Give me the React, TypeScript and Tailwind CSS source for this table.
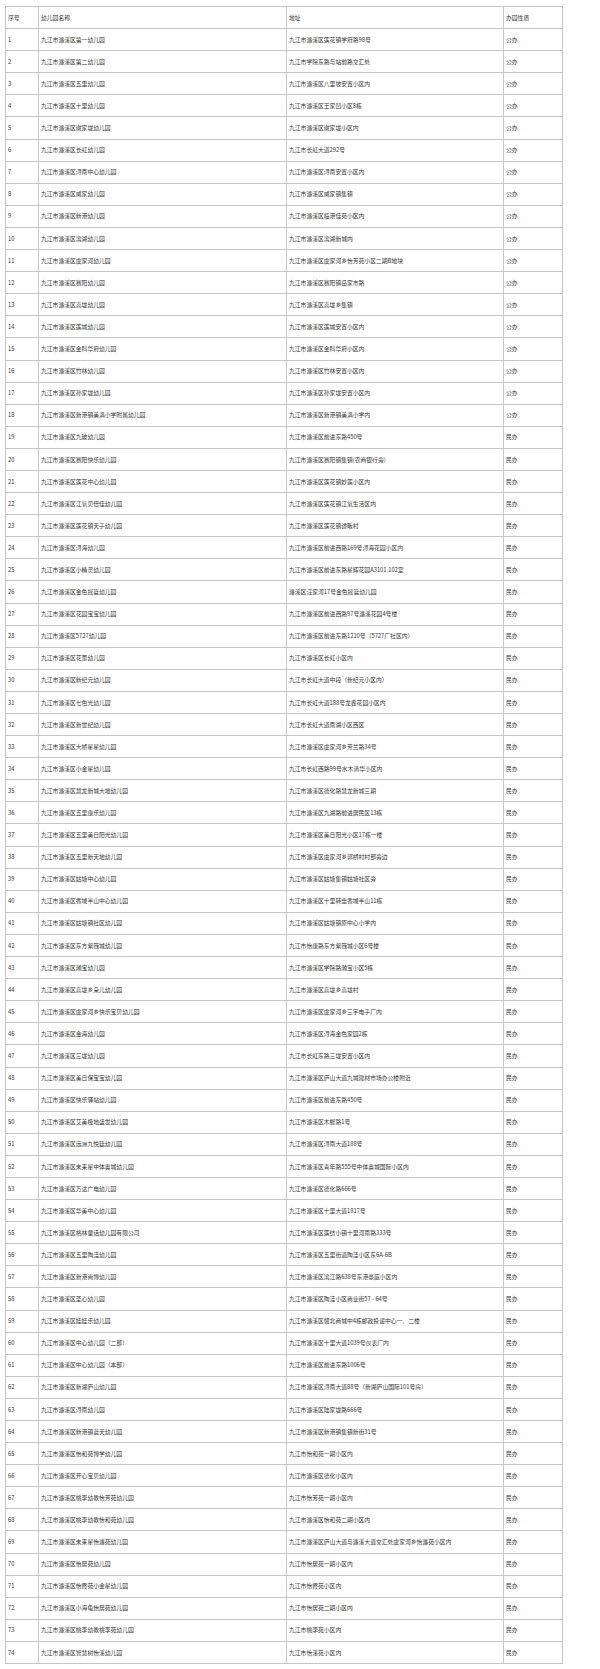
const rows: [string, string, string][] = [
  ['九江市濂溪区第一幼儿园', '九江市濂溪区莲花镇学府路98号', '公办'],
  ['九江市濂溪区第二幼儿园', '九江市学院东路与站前路交汇处', '公办'],
  ['九江市濂溪区五里幼儿园', '九江市濂溪区八里坡安置小区内', '公办'],
  ['九江市濂溪区十里幼儿园', '九江市濂溪区王家凹小区8栋', '公办'],
  ['九江市濂溪区谢家垅幼儿园', '九江市濂溪区谢家垅小区内', '公办'],
  ['九江市濂溪区长虹幼儿园', '九江市长虹大道292号', '公办'],
  ['九江市濂溪区浔南中心幼儿园', '九江市濂溪区浔南安置小区内', '公办'],
  ['九江市濂溪区威家幼儿园', '九江市濂溪区威家镇集镇', '公办'],
  ['九江市濂溪区新港幼儿园', '九江市濂溪区临港佳苑小区内', '公办'],
  ['九江市濂溪区滨湖幼儿园', '九江市濂溪区滨湖新城内', '公办'],
  ['九江市濂溪区虞家河幼儿园', '九江市濂溪区虞家河乡怡芳苑小区二期B地块', '公办'],
  ['九江市濂溪区赛阳幼儿园', '九江市濂溪区赛阳镇岳家市路', '公办'],
  ['九江市濂溪区高垅幼儿园', '九江市濂溪区高垅乡集镇', '公办'],
  ['九江市濂溪区莲城幼儿园', '九江市濂溪区莲城安置小区内', '公办'],
  ['九江市濂溪区金科华府幼儿园', '九江市濂溪区金科华府小区内', '公办'],
  ['九江市濂溪区竹林幼儿园', '九江市濂溪区竹林安置小区内', '公办'],
  ['九江市濂溪区孙家垅幼儿园', '九江市濂溪区孙家垅安置小区内', '公办'],
  ['九江市濂溪区新港镇美满小学附属幼儿园', '九江市濂溪区新港镇美满小学内', '公办'],
  ['九江市濂溪区九玻幼儿园', '九江市濂溪区前进东路450号', '民办'],
  ['九江市濂溪区赛阳快乐幼儿园', '九江市濂溪区赛阳镇集镇(农商银行旁)', '民办'],
  ['九江市濂溪区莲花中心幼儿园', '九江市濂溪区莲花镇妙莲小区内', '民办'],
  ['九江市濂溪区江氧贝倍佳幼儿园', '九江市濂溪区莲花镇江氧生活区内', '民办'],
  ['九江市濂溪区莲花镇天子幼儿园', '九江市濂溪区莲花镇谭畈村', '民办'],
  ['九江市濂溪区浔海幼儿园', '九江市濂溪区前进西路169号浔海花园小区内', '民办'],
  ['九江市濂溪区小精灵幼儿园', '九江市濂溪区前进东路星辉花园A3101.102室', '民办'],
  ['九江市濂溪区金色摇篮幼儿园', '濂溪区汪家河17号金色摇篮幼儿园', '民办'],
  ['九江市濂溪区花园宝宝幼儿园', '九江市濂溪区前进西路97号濂溪花园4号楼', '民办'],
  ['九江市濂溪区5727幼儿园', '九江市濂溪区前进东路1210号（5727厂社区内）', '民办'],
  ['九江市濂溪区花蕾幼儿园', '九江市濂溪区长虹小区内', '民办'],
  ['九江市濂溪区新纪元幼儿园', '九江市长虹大道中段（新纪元小区内）', '民办'],
  ['九江市濂溪区七色光幼儿园', '九江市长虹大道188号龙鑫花园小区内', '民办'],
  ['九江市濂溪区新世纪幼儿园', '九江市长虹大道南湖小区西区', '民办'],
  ['九江市濂溪区大桥星星幼儿园', '九江市濂溪区虞家河乡芳兰路34号', '民办'],
  ['九江市濂溪区小金星幼儿园', '九江市长虹西路99号水木清华小区内', '民办'],
  ['九江市濂溪区慧龙新城大地幼儿园', '九江市濂溪区德化路慧龙新城三期', '民办'],
  ['九江市濂溪区五里康乐幼儿园', '九江市濂溪区九湖路前进居民区13栋', '民办'],
  ['九江市濂溪区五里美日阳光幼儿园', '九江市濂溪区美日阳光小区17栋一楼', '民办'],
  ['九江市濂溪区五里新天地幼儿园', '九江市濂溪区虞家河乡郭桥村村部旁边', '民办'],
  ['九江市濂溪区姑塘中心幼儿园', '九江市濂溪区姑塘集镇姑塘社区旁', '民办'],
  ['九江市濂溪区香域半山中心幼儿园', '九江市濂溪区十里转盘香域半山11栋', '民办'],
  ['九江市濂溪区姑塘镇社区幼儿园', '九江市濂溪区姑塘镇原中心小学内', '民办'],
  ['九江市濂溪区东方紫薇城幼儿园', '九江市怡康路东方紫薇城小区6号楼', '民办'],
  ['九江市濂溪区瀚宝幼儿园', '九江市濂溪区学院路瀚宝小区5栋', '民办'],
  ['九江市濂溪区高垅乡朵儿幼儿园', '九江市濂溪区高垅乡高垅村', '民办'],
  ['九江市濂溪区虞家河乡快乐宝贝幼儿园', '九江市濂溪区虞家河乡三宇电子厂内', '民办'],
  ['九江市濂溪区金海幼儿园', '九江市濂溪区浔海金色家园2栋', '民办'],
  ['九江市濂溪区三垅幼儿园', '九江市长虹东路三垅安置小区内', '民办'],
  ['九江市濂溪区美日保宝宝幼儿园', '九江市濂溪区庐山大道九城建材市场办公楼附近', '民办'],
  ['九江市濂溪区快乐驿站幼儿园', '九江市濂溪区前进东路450号', '民办'],
  ['九江市濂溪区艾美极地盛世幼儿园', '九江市濂溪区木樨路1号', '民办'],
  ['九江市濂溪区远洲九悦廷幼儿园', '九江市濂溪区浔南大道188号', '民办'],
  ['九江市濂溪区未来星中体奥城幼儿园', '九江市濂溪区青年路555号中体奥城国际小区内', '民办'],
  ['九江市濂溪区万达广电幼儿园', '九江市濂溪区德化路666号', '民办'],
  ['九江市濂溪区华美中心幼儿园', '九江市濂溪区十里大道1817号', '民办'],
  ['九江市濂溪区格林童话幼儿园有限公司', '九江市濂溪区莲纺小镇十里河南路333号', '民办'],
  ['九江市濂溪区五里陶洼幼儿园', '九江市濂溪区五里街道陶洼小区东6A-6B', '民办'],
  ['九江市濂溪区新港尚博幼儿园', '九江市濂溪区滨江路638号东港豪庭小区内', '民办'],
  ['九江市濂溪区圣心幼儿园', '九江市濂溪区陶洼小区商业街57 - 64号', '民办'],
  ['九江市濂溪区娃娃乐幼儿园', '九江市濂溪区赣北商城中4栋邮政投递中心一、二楼', '民办'],
  ['九江市濂溪区中心幼儿园（二部）', '九江市濂溪区十里大道1039号仪表厂内', '民办'],
  ['九江市濂溪区中心幼儿园（本部）', '九江市濂溪区前进东路1006号', '民办'],
  ['九江市濂溪区新湖庐山幼儿园', '九江市濂溪区浔南大道88号（新湖庐山国际101号房）', '民办'],
  ['九江市濂溪区浔南幼儿园', '九江市濂溪区陆家垅路666号', '民办'],
  ['九江市濂溪区新港镇蓝天幼儿园', '九江市濂溪区新港镇集镇新街31号', '民办'],
  ['九江市濂溪区怡和苑博学幼儿园', '九江市怡和苑一期小区内', '民办'],
  ['九江市濂溪区开心宝贝幼儿园', '九江市濂溪区德化小区内', '民办'],
  ['九江市濂溪区桃李幼教怡芳苑幼儿园', '九江市怡芳苑一期小区内', '民办'],
  ['九江市濂溪区桃李幼教怡和苑幼儿园', '九江市濂溪区怡和苑二期小区内', '民办'],
  ['九江市濂溪区未来星怡濂苑幼儿园', '九江市濂溪区庐山大道与濂溪大道交汇处虞家河乡怡濂苑小区内', '民办'],
  ['九江市濂溪区怡居苑幼儿园', '九江市怡居苑一期小区内', '民办'],
  ['九江市濂溪区怡霞苑小金星幼儿园', '九江市怡霞苑小区内', '民办'],
  ['九江市濂溪区小海龟怡居苑幼儿园', '九江市怡居苑二期小区内', '民办'],
  ['九江市濂溪区桃李幼教桃李苑幼儿园', '九江市桃李苑小区内', '民办'],
  ['九江市濂溪区智慧树怡溪幼儿园', '九江市怡溪苑小区内', '民办'],
];

const cell = 'h-[22.1px] border border-[#c6c6c6] px-[2px] py-0 align-middle';

export default function App() {
  return (
    <div className="min-h-screen bg-white pt-[6px] pl-[5px]">
      <table
        className="table-fixed border-collapse text-left text-[5.8px] leading-none text-[#333333]"
        style={{ fontFamily: '"Noto Sans CJK SC", "Noto Sans", sans-serif' }}
      >
        <colgroup>
          <col className="w-[33px]" />
          <col className="w-[248px]" />
          <col className="w-[217px]" />
          <col className="w-[59px]" />
        </colgroup>
        <thead>
          <tr>
            <th className={`${cell} font-normal`}>序号</th>
            <th className={`${cell} font-normal`}>幼儿园名称</th>
            <th className={`${cell} font-normal`}>地址</th>
            <th className={`${cell} font-normal`}>办园性质</th>
          </tr>
        </thead>
        <tbody>
          {rows.map(([name, address, kind], i) => (
            <tr key={i}>
              <td className={cell}>{i + 1}</td>
              <td className={cell}>{name}</td>
              <td className={cell}>{address}</td>
              <td className={cell}>{kind}</td>
            </tr>
          ))}
        </tbody>
      </table>
    </div>
  );
}
